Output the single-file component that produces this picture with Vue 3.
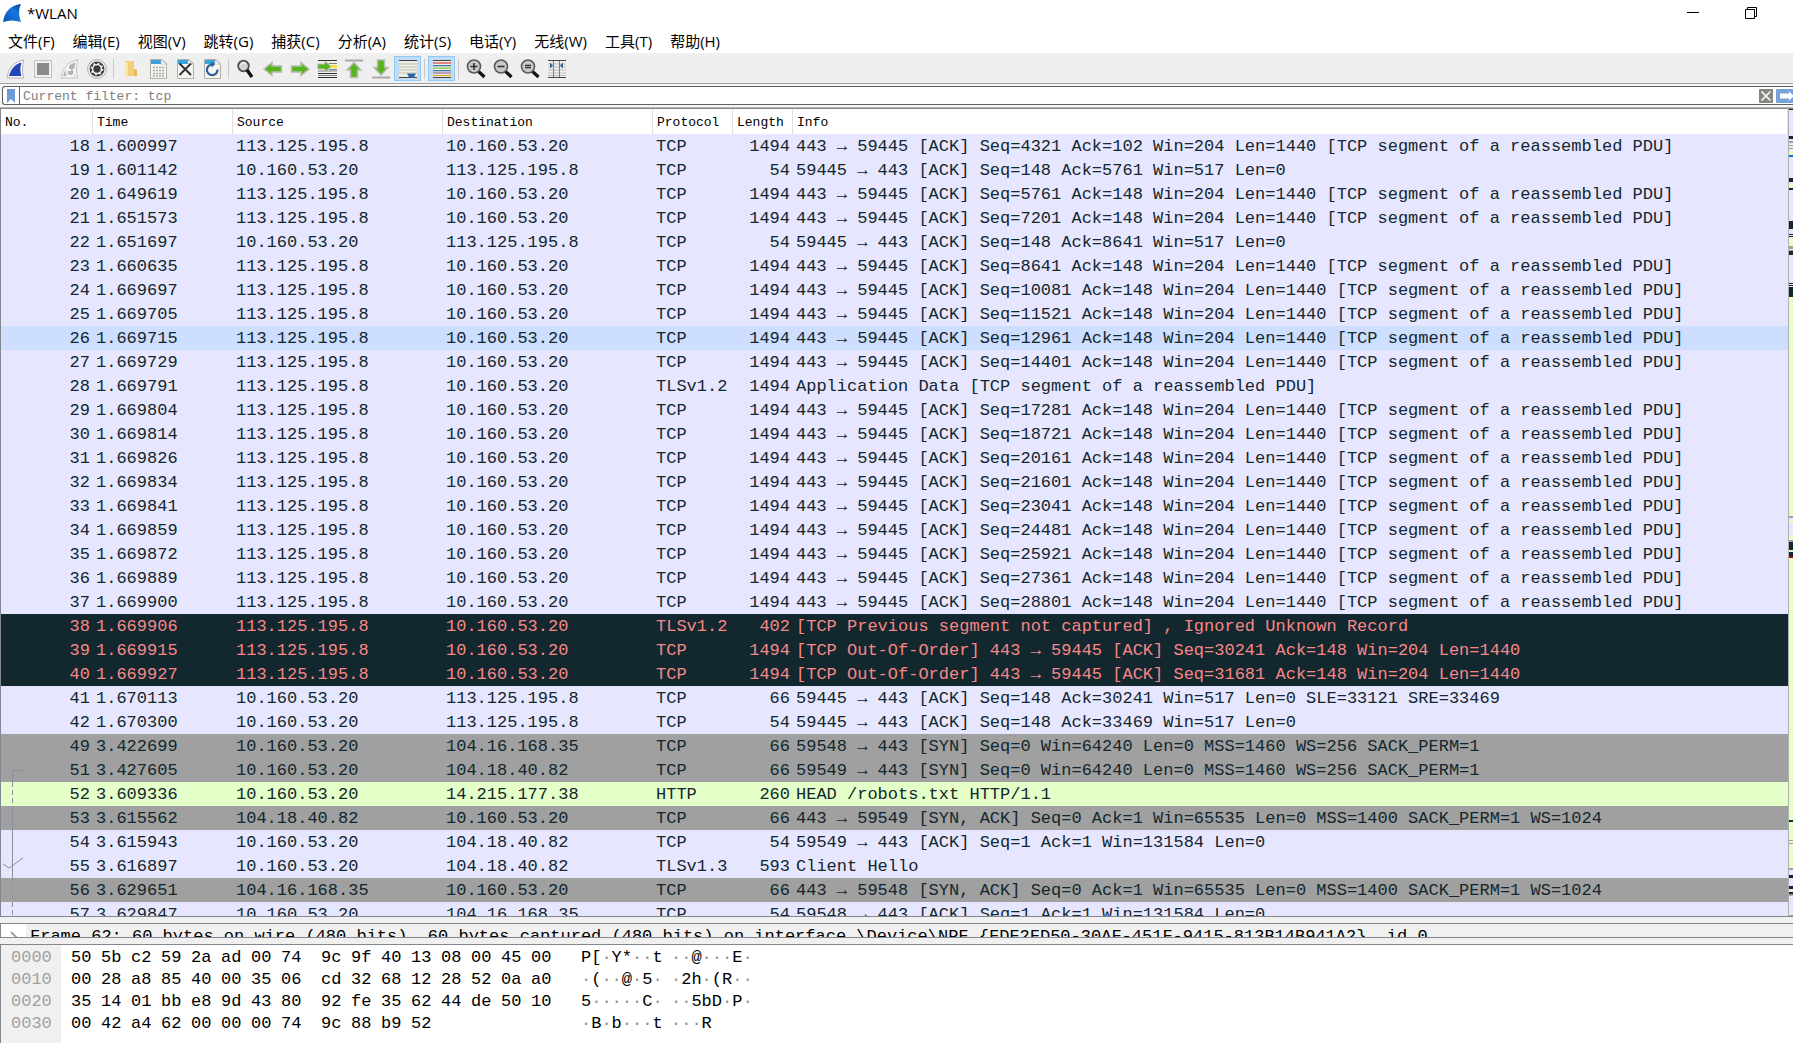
<script setup>
import { ref } from 'vue'

const menus = ['文件(F)', '编辑(E)', '视图(V)', '跳转(G)', '捕获(C)', '分析(A)', '统计(S)', '电话(Y)', '无线(W)', '工具(T)', '帮助(H)']
const columns = ['No.', 'Time', 'Source', 'Destination', 'Protocol', 'Length', 'Info']
const filter = ref('')

const A = '113.125.195.8'
const L = '10.160.53.20'
const PDU = '[TCP segment of a reassembled PDU]'
const seg = (no, time, seq, ack = 148) => ({ no, time, src: A, dst: L, proto: 'TCP', len: 1494, info: `443 → 59445 [ACK] Seq=${seq} Ack=${ack} Win=204 Len=1440 ${PDU}` })
const row = (no, time, src, dst, proto, len, info, kind = '', rel = '') => ({ no, time, src, dst, proto, len, info, kind, rel })

const packets = [
  seg(18, '1.600997', 4321, 102),
  row(19, '1.601142', L, A, 'TCP', 54, '59445 → 443 [ACK] Seq=148 Ack=5761 Win=517 Len=0'),
  seg(20, '1.649619', 5761),
  seg(21, '1.651573', 7201),
  row(22, '1.651697', L, A, 'TCP', 54, '59445 → 443 [ACK] Seq=148 Ack=8641 Win=517 Len=0'),
  seg(23, '1.660635', 8641),
  seg(24, '1.669697', 10081),
  seg(25, '1.669705', 11521),
  { ...seg(26, '1.669715', 12961), kind: 'hover' },
  seg(27, '1.669729', 14401),
  row(28, '1.669791', A, L, 'TLSv1.2', 1494, `Application Data ${PDU}`),
  seg(29, '1.669804', 17281),
  seg(30, '1.669814', 18721),
  seg(31, '1.669826', 20161),
  seg(32, '1.669834', 21601),
  seg(33, '1.669841', 23041),
  seg(34, '1.669859', 24481),
  seg(35, '1.669872', 25921),
  seg(36, '1.669889', 27361),
  seg(37, '1.669900', 28801),
  row(38, '1.669906', A, L, 'TLSv1.2', 402, '[TCP Previous segment not captured] , Ignored Unknown Record', 'bad'),
  row(39, '1.669915', A, L, 'TCP', 1494, '[TCP Out-Of-Order] 443 → 59445 [ACK] Seq=30241 Ack=148 Win=204 Len=1440', 'bad'),
  row(40, '1.669927', A, L, 'TCP', 1494, '[TCP Out-Of-Order] 443 → 59445 [ACK] Seq=31681 Ack=148 Win=204 Len=1440', 'bad'),
  row(41, '1.670113', L, A, 'TCP', 66, '59445 → 443 [ACK] Seq=148 Ack=30241 Win=517 Len=0 SLE=33121 SRE=33469'),
  row(42, '1.670300', L, A, 'TCP', 54, '59445 → 443 [ACK] Seq=148 Ack=33469 Win=517 Len=0'),
  row(49, '3.422699', L, '104.16.168.35', 'TCP', 66, '59548 → 443 [SYN] Seq=0 Win=64240 Len=0 MSS=1460 WS=256 SACK_PERM=1', 'syn'),
  row(51, '3.427605', L, '104.18.40.82', 'TCP', 66, '59549 → 443 [SYN] Seq=0 Win=64240 Len=0 MSS=1460 WS=256 SACK_PERM=1', 'syn', 'start'),
  row(52, '3.609336', L, '14.215.177.38', 'HTTP', 260, 'HEAD /robots.txt HTTP/1.1', 'http', 'dash'),
  row(53, '3.615562', '104.18.40.82', L, 'TCP', 66, '443 → 59549 [SYN, ACK] Seq=0 Ack=1 Win=65535 Len=0 MSS=1400 SACK_PERM=1 WS=1024', 'syn', 'line'),
  row(54, '3.615943', L, '104.18.40.82', 'TCP', 54, '59549 → 443 [ACK] Seq=1 Ack=1 Win=131584 Len=0', '', 'line'),
  row(55, '3.616897', L, '104.18.40.82', 'TLSv1.3', 593, 'Client Hello', '', 'ack'),
  row(56, '3.629651', '104.16.168.35', L, 'TCP', 66, '443 → 59548 [SYN, ACK] Seq=0 Ack=1 Win=65535 Len=0 MSS=1400 SACK_PERM=1 WS=1024', 'syn', 'dash'),
  row(57, '3.629847', L, '104.16.168.35', 'TCP', 54, '59548 → 443 [ACK] Seq=1 Ack=1 Win=131584 Len=0', '', 'dash'),
]

const relPaths = {
  start: 'M22.5 12.5H11.5V24',
  line: 'M11.5 0V24',
  dash: 'M11.5 0V24',
  ack: 'M11.5 0V24M2 10L8 14L22 4',
}

// Overview strip beside the packet list: [offset, height, colour]
const D = '#12272e', G = '#a0a0a0', N = '#e4ffc7', V = '#e7e6ff'
const strip = [
  [0, 1, D], [27, 3, D], [32, 2, G], [35, 1, N], [36, 1, G], [37, 1, N], [39, 1, G], [42, 4, N], [46, 2, '#0078d7'],
  [69, 4, D], [75, 4, N], [79, 2, D], [112, 8, D], [125, 1, D], [127, 1, D], [129, 8, N], [137, 3, G], [141, 1, G],
  [142, 4, D], [174, 1, D], [176, 1, D], [178, 10, D], [188, 620, N], [408, 2, G], [410, 2, V], [414, 12, V],
  [427, 1, V], [432, 2, G], [434, 8, D], [444, 4, D], [448, 2, '#a40000'], [712, 2, D], [732, 1, G], [735, 1, G],
  [738, 1, V], [747, 1, V], [760, 2, G], [762, 46, V], [767, 3, D], [778, 3, D], [782, 2, N], [784, 2, D], [786, 2, G],
  [806, 1, N], [807, 1, G],
]

const dump = [
  ['0000', '50 5b c2 59 2a ad 00 74', '9c 9f 40 13 08 00 45 00', 'P[·Y*··t', '··@···E·'],
  ['0010', '00 28 a8 85 40 00 35 06', 'cd 32 68 12 28 52 0a a0', '·(··@·5·', '·2h·(R··'],
  ['0020', '35 14 01 bb e8 9d 43 80', '92 fe 35 62 44 de 50 10', '5·····C·', '··5bD·P·'],
  ['0030', '00 42 a4 62 00 00 00 74', '9c 88 b9 52', '·B·b···t', '···R'],
]
</script>

<template>
  <div class="window">
    <header class="titlebar">
      <svg class="logo" width="20" height="20" viewBox="0 0 20 20" aria-hidden="true">
        <defs>
          <linearGradient id="fin" x1="0" y1="1" x2="1" y2="0">
            <stop offset="0" stop-color="#0a50b0" />
            <stop offset=".6" stop-color="#1477e0" />
            <stop offset="1" stop-color="#0a3f98" />
          </linearGradient>
        </defs>
        <path d="M1 19C2 10 8 2 19 1C16 7 17 13 19 19C13 17 7 17 1 19Z" fill="url(#fin)" />
      </svg>
      <h1>*WLAN</h1>
      <div class="winbtns">
        <button type="button" aria-label="最小化"><svg width="14" height="14" viewBox="0 0 14 14"><path d="M1 6.5H13" stroke="#000" /></svg></button>
        <button type="button" aria-label="还原"><svg width="14" height="14" viewBox="0 0 14 14"><path d="M1.5 3.5H10.5V12.5H1.5ZM3.5 3.5V1.5H12.5V10.5H10.5" stroke="#000" fill="none" /></svg></button>
      </div>
    </header>

    <nav class="menubar">
      <button v-for="m in menus" :key="m" type="button">{{ m }}</button>
    </nav>

    <div class="toolbar" role="toolbar">
      <button type="button" aria-label="开始捕获">
        <svg viewBox="0 0 20 20"><path d="M1 19C2 10 8 2 18 1C16 7 16 13 18 19Z" fill="#f8f8f8" stroke="#b4b4b4" /><path d="M3 17C5 10 9 5 15.500 3.500C14 8 14 13 15.500 17Z" fill="#2446b8" /></svg>
      </button>
      <button type="button" aria-label="停止捕获">
        <svg viewBox="0 0 20 20"><rect x="1.500" y="1.500" width="17" height="17" fill="#f0f0f0" stroke="#c0c0c0" /><rect x="4" y="4" width="12" height="12" fill="#8c8c8c" /></svg>
      </button>
      <button type="button" aria-label="重新捕获">
        <svg viewBox="0 0 20 20"><path d="M1 19C2 10 8 2 18 1C16 7 16 13 18 19Z" fill="#f4f4f4" stroke="#c4c4c4" /><path d="M3 17C5 10 9 5 15.500 3.500C14 8 14 13 15.500 17Z" fill="#b4b4b4" /><path d="M13 10A4 4 0 1 1 8 10M8 7V11H11" fill="none" stroke="#f8f8f8" stroke-width="2" /></svg>
      </button>
      <button type="button" aria-label="捕获选项">
        <svg viewBox="0 0 20 20"><circle cx="10" cy="10" r="9.400" fill="#f4f4f4" stroke="#a8a8a8" /><circle cx="10" cy="10" r="7.500" fill="#3c3c3c" /><circle cx="10" cy="10" r="4.400" fill="none" stroke="#f4f4f4" stroke-width="1.500" /><circle cx="10" cy="10" r="5.500" fill="none" stroke="#f4f4f4" stroke-width="1.800" stroke-dasharray="1.700 2.620" /></svg>
      </button>
      <span class="sep"></span>
      <button type="button" aria-label="打开">
        <svg viewBox="0 0 20 20"><path d="M4 2H13V10L16 11V17H6Z" fill="#f3d078" /><path d="M4 2L7 4V19L4 17Z" fill="#ffe6a0" /><path d="M13 10L16 11V17H13Z" fill="#e6bb52" /></svg>
      </button>
      <button v-for="f in ['save', 'close', 'reload']" :key="f" type="button" :aria-label="f">
        <svg viewBox="0 0 20 20">
          <path d="M2.500 .5H14L18.500 4.500V19.500H2.500Z" fill="#f6f6f0" stroke="#b0b0a8" />
          <path d="M3 1H13V5H3Z" fill="#36a4e0" /><path d="M13 1V5H18Z" fill="#fff" stroke="#b0b0a8" stroke-width=".6" />
          <path v-if="f === 'save'" d="M5 8.500H16M5 11.500H16M5 14.500H16M5 17H16" stroke="#a8a8a8" stroke-width="1.600" stroke-dasharray="2 1" />
          <path v-else-if="f === 'close'" d="M4.500 4.500L16 16M16 4.500L4.500 16" stroke="#303438" stroke-width="2" />
          <g v-else fill="none" stroke="#2c5c9c" stroke-width="2.200"><path d="M15.500 10.500A5.300 5.300 0 1 1 10.500 5.500" /><path d="M9.500 2.500L13 5.500L9.500 8.500Z" fill="#2c5c9c" stroke="none" /></g>
        </svg>
      </button>
      <span class="sep"></span>
      <button type="button" aria-label="查找">
        <svg viewBox="0 0 20 20"><circle cx="7.500" cy="7" r="5.300" fill="#d4d4d4" stroke="#505050" stroke-width="1.800" /><path d="M4.500 6Q6 3.500 9 4" stroke="#fff" fill="none" /><path d="M11 11L16 18" stroke="#101010" stroke-width="3.400" /></svg>
      </button>
      <button type="button" aria-label="上一个">
        <svg viewBox="0 0 20 20"><path d="M1 10L9 3.500V7H18.500V13H9V16.500Z" fill="#58b41c" stroke="#b8bcb4" stroke-width="1.500" /></svg>
      </button>
      <button type="button" aria-label="下一个">
        <svg viewBox="0 0 20 20"><path d="M19 10L11 3.500V7H1.500V13H11V16.500Z" fill="#58b41c" stroke="#b8bcb4" stroke-width="1.500" /></svg>
      </button>
      <button type="button" aria-label="转到分组">
        <svg viewBox="0 0 20 20"><path d="M1 1.500H20M1 14.500H20M1 18.500H20" stroke="#303030" /><path d="M12 4.500H20M12 10.500H20M1 12H20M1 16.500H20" stroke="#808080" /><path d="M13 6H20V9H13Z" fill="#fae03c" /><path d="M14 7.500L8 2V5H.8V10H8V13Z" fill="#58b41c" stroke="#b8bcb4" /></svg>
      </button>
      <button type="button" aria-label="首个分组">
        <svg viewBox="0 0 20 20"><path d="M1 1.500H19" stroke="#a8a8a8" stroke-width="2" /><path d="M10 3.500L17 11H13.500V18.500H6.500V11H3Z" fill="#58b41c" stroke="#b8bcb4" stroke-width="1.500" /></svg>
      </button>
      <button type="button" aria-label="最后分组">
        <svg viewBox="0 0 20 20"><path d="M1 18.500H19" stroke="#a8a8a8" stroke-width="2" /><path d="M10 16L17 8.500H13.500V1H6.500V8.500H3Z" fill="#58b41c" stroke="#b8bcb4" stroke-width="1.500" /></svg>
      </button>
      <button type="button" class="on" aria-label="自动滚动" aria-pressed="true">
        <svg viewBox="0 0 20 20"><path d="M1 2H19V19H1Z" fill="#ecece6" /><path d="M1 1.500H19M1 18.500H19" stroke="#404448" /><path d="M1 5H19M1 8H19M1 11H19M1 14H19" stroke="#c0c0b8" /><path d="M9 14.500H18L15.500 19H11.500Z" fill="#2c62a4" /></svg>
      </button>
      <span class="sep"></span>
      <button type="button" class="on" aria-label="着色分组" aria-pressed="true">
        <svg viewBox="0 0 20 20"><path d="M1 1H19V19H1Z" fill="#f0f0ea" /><path d="M1 1.500H19M1 18.500H19" stroke="#404448" /><path d="M1 4H19" stroke="#e83838" stroke-width="1.200" /><path d="M1 6.700H19" stroke="#3868b0" stroke-width="1.200" /><path d="M1 9.200H19" stroke="#78d028" stroke-width="1.200" /><path d="M1 11.700H19" stroke="#3868b0" stroke-width="1.200" /><path d="M1 14H19" stroke="#906898" stroke-width="1.200" /><path d="M1 16.500H19" stroke="#d8a820" stroke-width="1.200" /></svg>
      </button>
      <span class="sep"></span>
      <button v-for="z in ['放大', '缩小', '正常大小']" :key="z" type="button" :aria-label="z">
        <svg viewBox="0 0 20 20"><path d="M12 12L18.500 18" stroke="#101010" stroke-width="3.200" /><circle cx="8" cy="7.500" r="6.500" fill="#c8c8c8" stroke="#585858" stroke-width="1.600" /><path v-if="z === '放大'" d="M4.500 7.500H11.500M8 4V11" stroke="#303030" stroke-width="1.600" /><path v-else-if="z === '缩小'" d="M4.500 7.500H11.500" stroke="#303030" stroke-width="1.600" /><path v-else d="M5 6.500H11M5 8.700H11" stroke="#303030" stroke-width="1.300" /></svg>
      </button>
      <button type="button" aria-label="调整列宽">
        <svg viewBox="0 0 20 20"><path d="M1 1.500H19M1 18.500H19" stroke="#404448" /><path d="M1 5H19M1 8H19M1 11H19M1 14H19M1 16.500H19" stroke="#c0c0b8" /><path d="M6.500 2V18M12.500 2V18" stroke="#808080" /><path d="M3 3.500L6 6.500L3 9.500ZM16 3.500L13 6.500L16 9.500Z" fill="#2c62a4" /></svg>
      </button>
    </div>

    <form class="filterbar" @submit.prevent>
      <div class="filterbox">
        <button type="button" class="bookmark" aria-label="书签">
          <svg width="8" height="14" viewBox="0 0 8 14"><path d="M0 0H8V14L4 10L0 14Z" fill="#6f9bd4" /></svg>
        </button>
        <input v-model="filter" type="text" aria-label="显示过滤器" placeholder="Current filter: tcp" />
        <button type="button" class="clear" aria-label="清除">
          <svg width="14" height="14" viewBox="0 0 14 14"><rect width="14" height="14" rx="1" fill="#868680" /><path d="M2.500 2.500L11.500 11.500M11.500 2.500L2.500 11.500" stroke="#fff" stroke-width="1.500" /></svg>
        </button>
        <button type="submit" class="apply" aria-label="应用">
          <svg width="17" height="14" viewBox="0 0 17 14"><path d="M1 0H17V14H1Q0 14 0 13V1Q0 0 1 0Z" fill="#78a2d8" /><path d="M4 4.500H13V2.500L17 6V8L13 11.500V9.500H4Z" fill="#fff" /></svg>
        </button>
      </div>
    </form>

    <main class="list">
      <div class="scroller">
        <table>
          <colgroup>
            <col class="c-no" /><col class="c-time" /><col class="c-addr" /><col class="c-addr" /><col class="c-proto" /><col class="c-len" /><col />
          </colgroup>
          <thead>
            <tr><th v-for="c in columns" :key="c" scope="col">{{ c }}</th></tr>
          </thead>
          <tbody>
            <tr v-for="p in packets" :key="p.no" :class="p.kind">
              <td class="num">
                <svg v-if="p.rel" class="rel" width="24" height="24" viewBox="0 0 24 24" aria-hidden="true"><path :d="relPaths[p.rel]" :class="{ dashed: p.rel === 'dash' }" /></svg>{{ p.no }}
              </td>
              <td>{{ p.time }}</td>
              <td>{{ p.src }}</td>
              <td>{{ p.dst }}</td>
              <td>{{ p.proto }}</td>
              <td class="num">{{ p.len }}</td>
              <td>{{ p.info }}</td>
            </tr>
          </tbody>
        </table>
      </div>
      <svg class="strip" viewBox="0 0 4 808" preserveAspectRatio="none" shape-rendering="crispEdges" aria-hidden="true">
        <rect v-for="(s, i) in strip" :key="i" x="0" :y="s[0]" width="4" :height="s[1]" :fill="s[2]" />
      </svg>
    </main>

    <section class="detail">
      <span class="twisty"><svg width="8" height="12" viewBox="0 0 8 12"><path d="M1 1L6 6L1 11" fill="none" stroke="#a0a0a0" stroke-width="2" /></svg></span>
      <span class="frame">Frame 62: 60 bytes on wire (480 bits), 60 bytes captured (480 bits) on interface \Device\NPF_{FDF2FD50-30AF-451F-9415-813B14B941A2}, id 0</span>
    </section>

    <section class="hex">
      <div v-for="d in dump" :key="d[0]" class="hexrow">
        <span class="offset">{{ d[0] }}</span>
        <span class="bytes"><span v-for="(b, i) in d[1].split(' ')" :key="i">{{ b }}</span></span>
        <span class="bytes"><span v-for="(b, i) in d[2].split(' ')" :key="i">{{ b }}</span></span>
        <span v-for="k in [3, 4]" :key="k" class="ascii"><span v-for="(c, i) in d[k]" :key="i" :class="{ dot: c === '·' }">{{ c }}</span></span>
      </div>
    </section>
  </div>
</template>

<style>
body {
  margin: 0;
  overflow: hidden;
}
</style>

<style scoped>
.window {
  display: flex;
  flex-direction: column;
  height: 100vh;
  background: #f0f0f0;
  color: #000;
  font-family: "Open Sans", "Noto Sans CJK SC", sans-serif;
  overflow: hidden;
}
button {
  border: 0;
  margin: 0;
  padding: 0;
  background: none;
  font: inherit;
  color: inherit;
}
svg {
  display: block;
}
.titlebar {
  display: flex;
  align-items: center;
  gap: 5px;
  box-sizing: border-box;
  height: 28px;
  padding: 0 35px 2px 2px;
  background: #fff;
}
h1 {
  flex: 1;
  margin: 0;
  font-size: 15px;
  font-weight: 400;
}
.winbtns {
  display: flex;
  gap: 44px;
}
.menubar {
  display: flex;
  gap: 18px;
  height: 25px;
  padding: 0 8px;
  background: #fff;
  border-bottom: 1px solid #f0f0f0;
  font-size: 15px;
  line-height: 26px;
  white-space: nowrap;
}
.toolbar {
  display: flex;
  align-items: center;
  height: 27px;
  padding: 1px 2px;
  background: #efefef;
  border-bottom: 1px solid #a0a0a0;
}
.toolbar button {
  box-sizing: border-box;
  width: 27px;
  height: 25px;
  display: grid;
  place-items: center;
  border: 1px solid transparent;
}
.toolbar button.on {
  background: #c2dcf3;
  border-color: #90c8f6;
}
.toolbar svg {
  width: 20px;
  height: 20px;
}
.sep {
  width: 1px;
  height: 20px;
  margin: 0 3px;
  background: #c8c8c8;
}
.filterbar {
  padding: 2px 0 2px 2px;
  background: #f6f6f6;
  border-bottom: 1px solid #b8b8b8;
}
.filterbox {
  display: flex;
  align-items: center;
  height: 17px;
  background: #fff;
  border: 1px solid #606060;
  border-right: 0;
  border-radius: 3px 0 0 3px;
}
.bookmark {
  display: grid;
  place-items: center;
  width: 17px;
  height: 17px;
  border-right: 1px solid #606060;
}
.filterbox input {
  flex: 1;
  box-sizing: border-box;
  height: 17px;
  min-width: 0;
  padding: 2px 3px 0;
  border: 0;
  outline: 0;
  background: none;
  font: 13px "Liberation Mono", monospace;
}
.filterbox input::placeholder {
  color: #808080;
  opacity: 1;
}
.clear {
  margin-right: 3px;
}
.list {
  flex: 1;
  min-height: 0;
  display: flex;
  border: solid #828790;
  border-width: 1px 0 1px 1px;
  background: #e7e6ff;
}
.scroller {
  flex: 1;
  min-width: 0;
  overflow: hidden;
  border-right: 1px solid #b0b0b0;
}
.strip {
  width: 4px;
  height: 100%;
}
table {
  width: 100%;
  table-layout: fixed;
  border-collapse: separate;
  border-spacing: 0;
}
.c-no { width: 92px; }
.c-time { width: 140px; }
.c-addr { width: 210px; }
.c-proto { width: 80px; }
.c-len { width: 60px; }
th {
  height: 25px;
  box-sizing: border-box;
  padding: 2px 4px 0;
  background: #fff;
  border-right: 1px solid #e0e0e0;
  font: 13px "Liberation Mono", monospace;
  text-align: left;
}
td {
  position: relative;
  box-sizing: border-box;
  height: 24px;
  padding: 2px 3px 0;
  color: #12272e;
  font: 17px/22px "Liberation Mono", monospace;
  white-space: nowrap;
}
.num {
  text-align: right;
}
.hover { background: #cddeff; }
.syn { background: #a0a0a0; }
.http { background: #e4ffc7; }
.bad { background: #12272e; }
.bad td { color: #f78787; }
.rel {
  position: absolute;
  left: 0;
  top: 0;
  fill: none;
  stroke: #8a909c;
}
.dashed {
  stroke-dasharray: 5 3;
}
.detail {
  display: flex;
  height: 13px;
  margin: 6px 0;
  border: solid #828790;
  border-width: 1px 0 1px 1px;
  overflow: hidden;
}
.twisty {
  flex: none;
  box-sizing: border-box;
  width: 25px;
  padding: 7px 9px;
  background: #fff;
}
.frame {
  padding-left: 4px;
  font: 17px/26px "Liberation Mono", monospace;
  white-space: nowrap;
}
.hex {
  box-sizing: border-box;
  height: 99px;
  padding-top: 2px;
  border: solid #828790;
  border-width: 1px 0 0 1px;
  background: linear-gradient(90deg, #f0f0f0 60px, #fff 60px);
  font: 17px/22px "Liberation Mono", monospace;
}
.hexrow {
  display: flex;
  gap: 10px;
}
.offset {
  box-sizing: border-box;
  width: 60px;
  padding-left: 10px;
  color: #a0a0a0;
}
.bytes {
  display: grid;
  grid-template-columns: repeat(8, 30px);
}
.ascii {
  width: 80px;
  white-space: nowrap;
}
.bytes + .ascii {
  margin-left: 10px;
}
.dot {
  color: #909090;
}
</style>
